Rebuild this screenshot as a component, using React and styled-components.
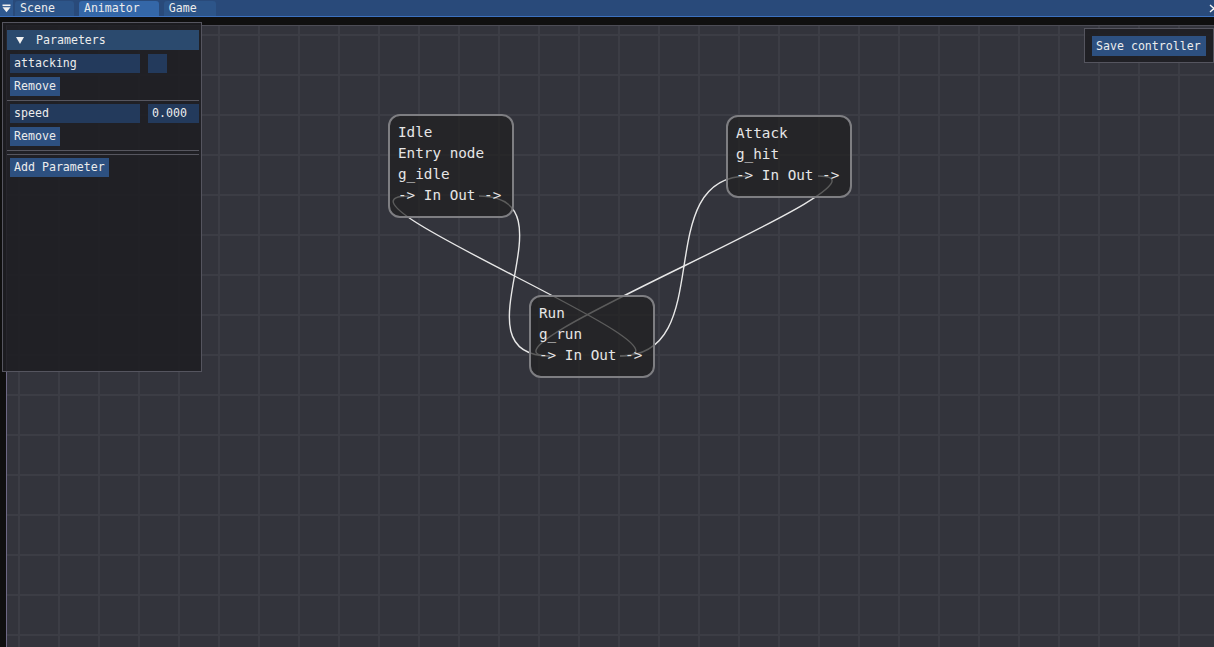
import React from "react";
import styled, { createGlobalStyle } from "styled-components";

const MONO = `"DejaVu Sans Mono", "Liberation Mono", monospace`;

const GlobalStyle = createGlobalStyle`
  html, body {
    margin: 0;
    padding: 0;
    background: #0f0f0f;
    overflow: hidden;
  }
  * {
    box-sizing: border-box;
  }
`;

// canvas padding box starts here, in page coordinates
const ORIGIN = { x: 7, y: 26 };

const Screen = styled.div`
  position: relative;
  width: 1214px;
  height: 647px;
  display: flex;
  flex-direction: column;
  background: #0f0f0f;
  font-family: ${MONO};
  font-size: 11.6px;
  color: #ececec;
  overflow: hidden;
`;

const TopBar = styled.div`
  display: flex;
  align-items: flex-end;
  height: 17px;
  flex-shrink: 0;
  background: #294a7a;
  border-bottom: 1px solid #3d72c0;
`;

const MenuButton = styled.div`
  align-self: stretch;
  width: 13px;
  display: flex;
  align-items: center;
  justify-content: center;
  background: #2f5990;
  margin-right: 2px;
`;

const Tab = styled.div`
  height: 15px;
  line-height: 15px;
  padding: 0 19px 0 5px;
  margin-right: 5px;
  border-radius: 3px 3px 0 0;
  background: ${(p) => (p.$active ? "#3467a8" : "#2d5589")};
  white-space: nowrap;
`;

const BarSpacer = styled.div`
  flex: 1;
`;

const CloseClip = styled.div`
  align-self: stretch;
  width: 5px;
  overflow: hidden;
  display: flex;
  align-items: center;
`;

const Canvas = styled.div`
  position: relative;
  flex: 1;
  margin: 8px 0 0 6px;
  border-top: 1px solid #4c4c55;
  border-left: 1px solid #6d6884;
  background-color: #33343c;
  background-image: linear-gradient(to right, #3c3d45 2px, transparent 2px),
    linear-gradient(to bottom, #3c3d45 2px, transparent 2px);
  background-size: 40px 40px;
  background-position: 11px 8px;
`;

const LinkLayer = styled.svg`
  position: absolute;
  left: 0;
  top: 0;
  width: 100%;
  height: 100%;
`;

const Node = styled.div`
  position: absolute;
  width: 126px;
  padding: 6px 8px 10px;
  border: 2px solid #7e7e82;
  border-radius: 12px;
  background: rgba(32, 32, 32, 0.7);
  font-size: 14.3px;
  line-height: 21px;
  color: #e6e6e6;
  white-space: pre;
`;

const FloatWindow = styled.div`
  position: absolute;
  background: rgba(30, 30, 34, 0.9);
  border: 1px solid #55555f;
`;

const ParamsWindow = styled(FloatWindow)`
  left: 2px;
  top: 22px;
  width: 200px;
  height: 350px;
  padding: 7px 2px 0 4px;
  display: flex;
  flex-direction: column;
  gap: 4px;
`;

const SaveWindow = styled(FloatWindow)`
  left: 1084px;
  top: 28px;
  width: 130px;
  height: 35px;
  padding: 7px;
`;

const Header = styled.div`
  height: 20px;
  display: flex;
  align-items: center;
  padding-left: 9px;
  gap: 12px;
  background: #2b4a6e;
`;

const Row = styled.div`
  display: flex;
  align-items: center;
  gap: 8px;
  padding-left: 3px;
`;

const Field = styled.div`
  width: ${(p) => p.$w}px;
  height: 19px;
  line-height: 19px;
  padding-left: 4px;
  background: #233a5c;
`;

const Button = styled.div`
  height: ${(p) => p.$h || 19}px;
  line-height: ${(p) => p.$h || 19}px;
  padding: 0 4px;
  background: #2d5080;
  white-space: nowrap;
`;

const Separator = styled.div`
  height: 1px;
  margin-bottom: -1px;
  background: #56565f;
`;

const nodes = [
  { id: "idle", x: 388, y: 114, lines: ["Idle", "Entry node", "g_idle"] },
  { id: "attack", x: 726, y: 115, lines: ["Attack", "g_hit"] },
  { id: "run", x: 529, y: 295, lines: ["Run", "g_run"] },
];

const ports = {
  idle: { in: [409, 196], out: [479, 196] },
  attack: { in: [748, 176], out: [818, 176] },
  run: { in: [550, 356], out: [620, 356] },
};

const links = [
  ["idle", "run"],
  ["run", "idle"],
  ["attack", "run"],
  ["run", "attack"],
];

const linkPath = (from, to, d = 100) => {
  const [x1, y1] = ports[from].out;
  const [x2, y2] = ports[to].in;
  return `M${x1} ${y1} C${x1 + d} ${y1} ${x2 - d} ${y2} ${x2} ${y2}`;
};

const Parameters = () => (
  <ParamsWindow>
    <Header>
      <svg width="8" height="7" viewBox="0 0 8 7">
        <polygon points="0,0 8,0 4,7" fill="#f0f0f0" />
      </svg>
      <span>Parameters</span>
    </Header>
    <Row>
      <Field $w={130}>attacking</Field>
      <Field $w={19} />
    </Row>
    <Row>
      <Button>Remove</Button>
    </Row>
    <Separator />
    <Row>
      <Field $w={130}>speed</Field>
      <Field $w={51}>0.000</Field>
    </Row>
    <Row>
      <Button>Remove</Button>
    </Row>
    <Separator />
    <Separator />
    <Row>
      <Button>Add Parameter</Button>
    </Row>
  </ParamsWindow>
);

const App = () => (
  <Screen>
    <GlobalStyle />
    <TopBar>
      <MenuButton>
        <svg width="9" height="9" viewBox="0 0 9 9">
          <rect x="0.5" y="0.5" width="8" height="1.6" fill="#f2f2f2" />
          <polygon points="0.5,3.2 8.5,3.2 4.5,8.2" fill="#f2f2f2" />
        </svg>
      </MenuButton>
      <Tab>Scene</Tab>
      <Tab $active>Animator</Tab>
      <Tab>Game</Tab>
      <BarSpacer />
      <CloseClip>
        <svg width="10" height="9" viewBox="0 0 10 9" style={{ flexShrink: 0 }}>
          <path d="M1 1 L9 8 M9 1 L1 8" stroke="#f2f2f2" strokeWidth="1.4" />
        </svg>
      </CloseClip>
    </TopBar>
    <Canvas>
      <LinkLayer>
        <g transform={`translate(${-ORIGIN.x} ${-ORIGIN.y})`}>
          {links.map(([a, b]) => (
            <path
              key={a + b}
              d={linkPath(a, b)}
              fill="none"
              stroke="#e8e8e8"
              strokeWidth="1.4"
            />
          ))}
        </g>
      </LinkLayer>
      {nodes.map((n) => (
        <Node key={n.id} style={{ left: n.x - ORIGIN.x, top: n.y - ORIGIN.y }}>
          {n.lines.map((l) => (
            <div key={l}>{l}</div>
          ))}
          <div>{"-> In Out ->"}</div>
        </Node>
      ))}
    </Canvas>
    <Parameters />
    <SaveWindow>
      <Button $h={20}>Save controller</Button>
    </SaveWindow>
  </Screen>
);

export default App;
